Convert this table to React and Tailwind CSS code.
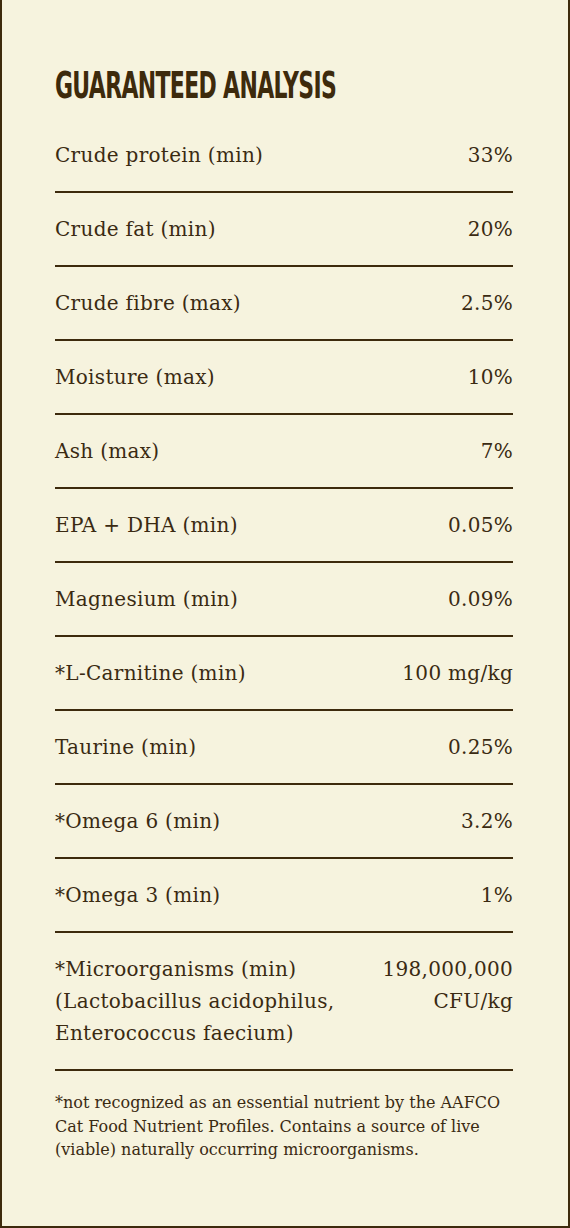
const rows = [
  ["Crude protein (min)", "33%"],
  ["Crude fat (min)", "20%"],
  ["Crude fibre (max)", "2.5%"],
  ["Moisture (max)", "10%"],
  ["Ash (max)", "7%"],
  ["EPA + DHA (min)", "0.05%"],
  ["Magnesium (min)", "0.09%"],
  ["*L-Carnitine (min)", "100 mg/kg"],
  ["Taurine (min)", "0.25%"],
  ["*Omega 6 (min)", "3.2%"],
  ["*Omega 3 (min)", "1%"],
];

export default function App() {
  return (
    <div className="min-h-[1228px] bg-[#f6f3de] border-x-2 border-b-2 border-[#3d2a0c] text-[#3a2a12] pl-[53px] pr-[55px] pt-[64px] pb-[60px] font-['DejaVu_Serif',serif]">
      <h2 className="font-['DejaVu_Sans_Condensed','DejaVu_Sans',sans-serif] font-bold text-[37px] leading-[44px] uppercase tracking-[-1px] text-[#3d2a0c] origin-left scale-x-[0.66] whitespace-nowrap">
        Guaranteed Analysis
      </h2>
      <div className="mt-[11px]">
        {rows.map(([name, value]) => (
          <div
            key={name}
            className="flex justify-between py-5 border-b-2 border-[#3d2a0c] text-[20px] leading-[32px] tracking-[0.3px]"
          >
            <span>{name}</span>
            <span>{value}</span>
          </div>
        ))}
        <div className="flex justify-between py-5 border-b-2 border-[#3d2a0c] text-[20px] leading-[32px] tracking-[0.3px]">
          <span>
            *Microorganisms (min)
            <br />
            (Lactobacillus acidophilus,
            <br />
            Enterococcus faecium)
          </span>
          <span className="text-right">
            198,000,000
            <br />
            CFU/kg
          </span>
        </div>
      </div>
      <p className="mt-[20px] text-[16px] leading-[23.5px] whitespace-nowrap">
        *not recognized as an essential nutrient by the AAFCO
        <br />
        Cat Food Nutrient Profiles. Contains a source of live
        <br />
        (viable) naturally occurring microorganisms.
      </p>
    </div>
  );
}
